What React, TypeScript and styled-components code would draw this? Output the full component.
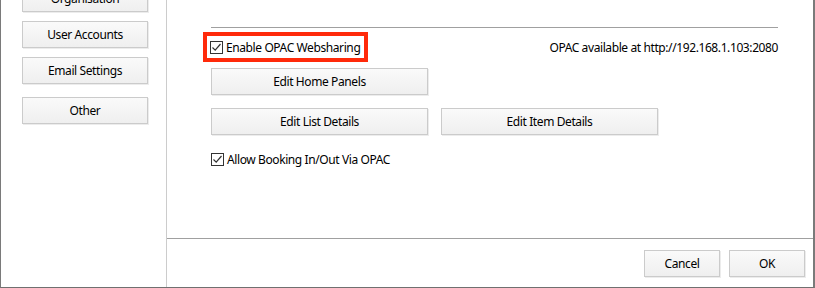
import styled, { createGlobalStyle } from "styled-components";

const GlobalStyle = createGlobalStyle`
  html, body {
    margin: 0;
    padding: 0;
    background: #ffffff;
    overflow: hidden;
  }
  body {
    font-family: "Segoe UI", "Noto Sans", "Liberation Sans", sans-serif;
    font-size: 12px;
    letter-spacing: -0.4px;
    color: #000000;
  }
`;

const Window = styled.div`
  display: flex;
  width: 815px;
  height: 288px;
  box-sizing: border-box;
  background: #ffffff;
  border-left: 1px solid #7a7a7a;
  border-right: 2px solid #7a7a7a;
  border-bottom: 1px solid #707070;
  overflow: hidden;
`;

const Sidebar = styled.div`
  width: 166px;
  flex-shrink: 0;
  border-right: 1px solid #cccccc;
  display: flex;
  flex-direction: column;
  align-items: flex-start;
  padding-left: 21px;
  box-sizing: border-box;
`;

const SideList = styled.div`
  display: flex;
  flex-direction: column;
  margin-top: -15px;
`;

const Button = styled.button<{ $w: number; $gap?: number }>`
  width: ${(p) => p.$w}px;
  height: 27px;
  margin-top: ${(p) => p.$gap ?? 0}px;
  padding: 0;
  box-sizing: border-box;
  border: 1px solid #cbcbcb;
  background: linear-gradient(#fafafa, #efefef);
  box-shadow: 1px 1px 0 #ececec;
  font-family: inherit;
  font-size: 12px;
  letter-spacing: inherit;
  color: #000000;
  display: flex;
  align-items: center;
  justify-content: center;
  flex-shrink: 0;
`;

const Main = styled.div`
  flex: 1;
  display: flex;
  flex-direction: column;
`;

const Content = styled.div`
  height: 239px;
  box-sizing: border-box;
  padding: 27px 35px 0 44px;
  border-bottom: 1px solid #a0a0a0;
  display: flex;
  flex-direction: column;
`;

const Rule = styled.div`
  height: 1px;
  background: #a0a0a0;
`;

const TopRow = styled.div`
  display: flex;
  align-items: center;
  justify-content: space-between;
  margin-top: 4px;
  margin-left: -8px;
`;

const Highlight = styled.div`
  display: flex;
  align-items: center;
  height: 30px;
  width: 165px;
  box-sizing: border-box;
  border: 4px solid #ff2a0a;
  padding-left: 3px;
`;

const CheckRow = styled.label<{ $gap?: number }>`
  display: flex;
  align-items: center;
  gap: 3px;
  margin-top: ${(p) => p.$gap ?? 0}px;
  white-space: nowrap;
`;

const Box = styled.span`
  width: 13px;
  height: 13px;
  box-sizing: border-box;
  border: 1px solid #333333;
  background: #ffffff;
  display: flex;
  align-items: center;
  justify-content: center;
  flex-shrink: 0;
`;

const Url = styled.span`
  white-space: nowrap;
`;

const ButtonRow = styled.div<{ $gap: number }>`
  display: flex;
  gap: 13px;
  margin-top: ${(p) => p.$gap}px;
`;

const Footer = styled.div`
  flex: 1;
  display: flex;
  justify-content: flex-end;
  align-items: flex-start;
  gap: 9px;
  padding: 11px 8px 0 0;
`;

function Check({ label, gap }: { label: string; gap?: number }) {
  return (
    <CheckRow $gap={gap}>
      <Box>
        <svg width="11" height="11" viewBox="0 0 11 11">
          <path d="M1.5 5.5 L4.2 8.2 L9.5 2" fill="none" stroke="#333" strokeWidth="1.2" />
        </svg>
      </Box>
      {label}
    </CheckRow>
  );
}

export default function App() {
  return (
    <>
      <GlobalStyle />
      <Window>
        <Sidebar>
          <SideList>
            <Button $w={126}>Organisation</Button>
            <Button $w={126} $gap={9}>User Accounts</Button>
            <Button $w={126} $gap={9}>Email Settings</Button>
            <Button $w={126} $gap={13}>Other</Button>
          </SideList>
        </Sidebar>
        <Main>
          <Content>
            <Rule />
            <TopRow>
              <Highlight>
                <Check label="Enable OPAC Websharing" />
              </Highlight>
              <Url>OPAC available at http://192.168.1.103:2080</Url>
            </TopRow>
            <ButtonRow $gap={6}>
              <Button $w={217}>Edit Home Panels</Button>
            </ButtonRow>
            <ButtonRow $gap={13}>
              <Button $w={217}>Edit List Details</Button>
              <Button $w={217}>Edit Item Details</Button>
            </ButtonRow>
            <Check label="Allow Booking In/Out Via OPAC" gap={16} />
          </Content>
          <Footer>
            <Button $w={76}>Cancel</Button>
            <Button $w={76}>OK</Button>
          </Footer>
        </Main>
      </Window>
    </>
  );
}
